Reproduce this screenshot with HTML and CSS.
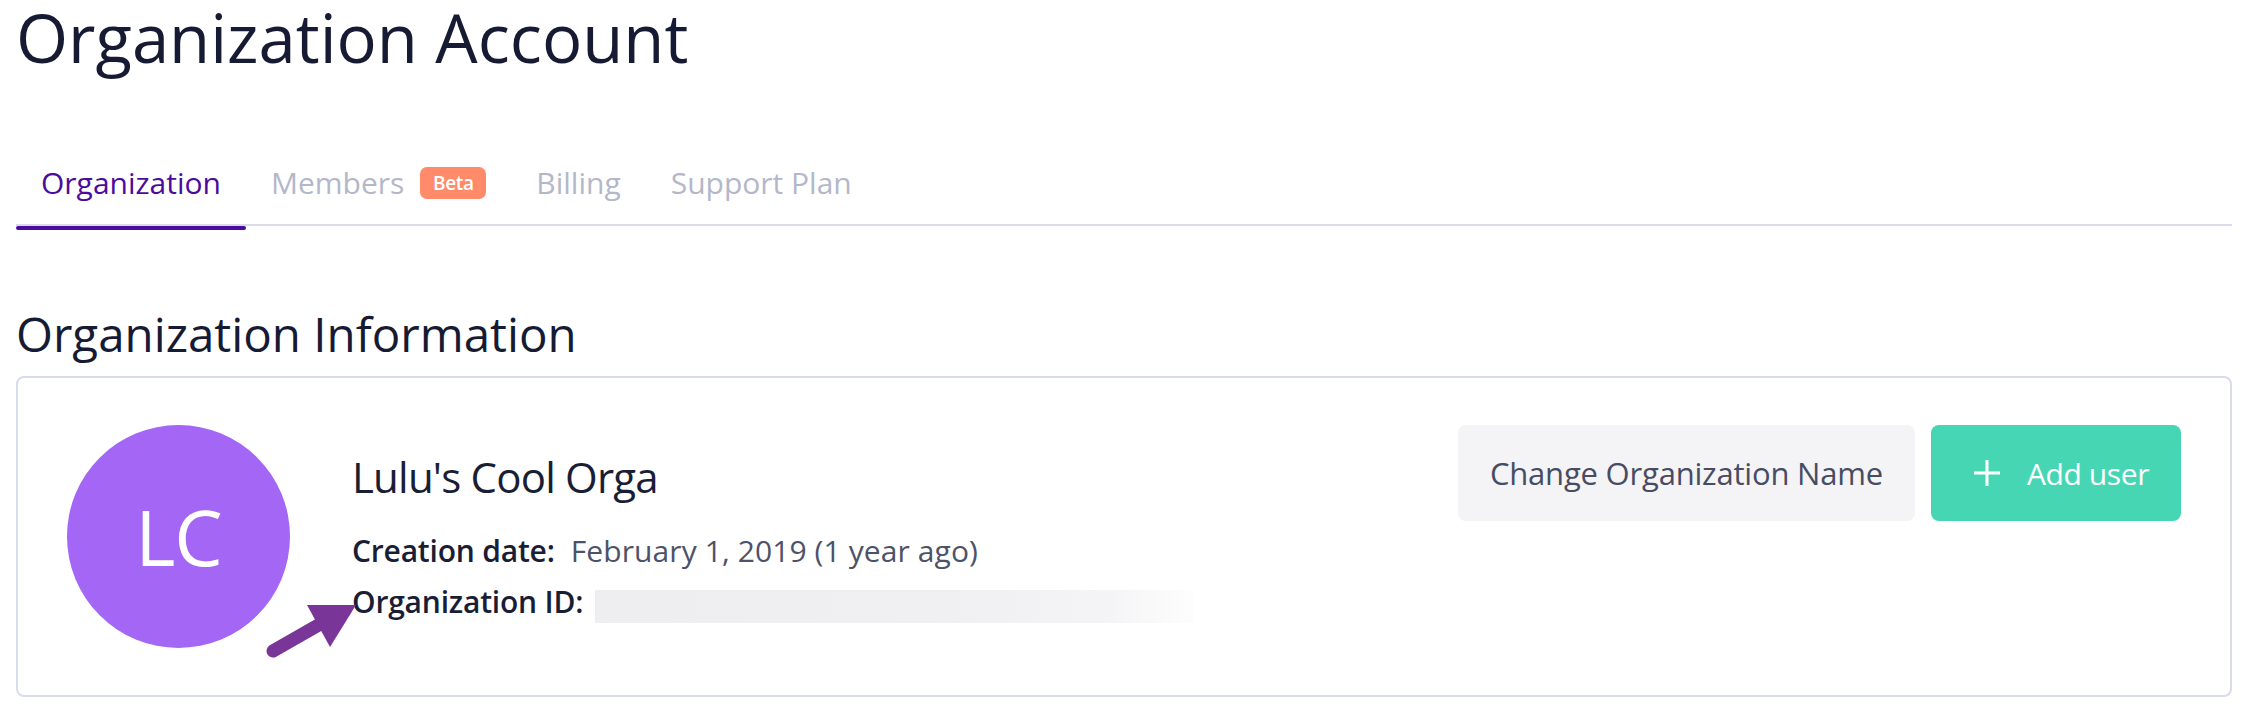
FILE: index.html
```html
<!DOCTYPE html>
<html lang="en">
<head>
<meta charset="utf-8">
<title>Organization Account</title>
<link rel="stylesheet" href="styles.css">
</head>
<body>
<div class="page">
  <h1 class="page-title">Organization Account</h1>

  <nav class="tabs">
    <a class="tab tab-active">Organization</a>
    <a class="tab">Members <span class="badge">Beta</span></a>
    <a class="tab">Billing</a>
    <a class="tab">Support Plan</a>
  </nav>

  <h2 class="section-title">Organization Information</h2>

  <section class="card">
    <div class="avatar">LC</div>
    <div class="info">
      <div class="org-name">Lulu's Cool Orga</div>
      <div class="details">
        <div class="row">
          <span class="label">Creation date:</span>
          <span class="value value-date">February 1, 2019 (1 year ago)</span>
        </div>
        <div class="row">
          <span class="label">Organization ID:</span>
          <span class="id-mask"></span>
        </div>
      </div>
    </div>
    <div class="actions">
      <button class="btn btn-secondary">Change Organization Name</button>
      <button class="btn btn-primary">
        <svg class="plus" width="28" height="28" viewBox="0 0 28 28" aria-hidden="true">
          <path d="M14 1V27M1 14H27" stroke="#ffffff" stroke-width="3" fill="none"/>
        </svg>
        <span>Add user</span>
      </button>
    </div>
    <svg class="annotation-arrow" width="130" height="80" viewBox="0 0 130 80" aria-hidden="true">
      <path d="M33 61L82 33" stroke="#7a3599" stroke-width="13" stroke-linecap="round" fill="none"/>
      <polygon points="116,15 67,15 90,57" fill="#7a3599"/>
    </svg>
  </section>
</div>
</body>
</html>
```

FILE: styles.css
```css
* {
  box-sizing: border-box;
}

html, body {
  margin: 0;
  padding: 0;
  background: #ffffff;
}

body {
  font-family: "Open Sans", "Noto Sans", sans-serif;
  color: #171b33;
}

.page {
  padding: 0 12px 0 16px;
}

.page-title {
  margin: 0;
  font-size: 67px;
  line-height: 74px;
  font-weight: 400;
  color: #161a33;
}

.tabs {
  display: flex;
  margin-top: 73px;
  border-bottom: 2px solid #d9dbe9;
}

.tab {
  position: relative;
  display: flex;
  align-items: center;
  padding: 16px 25px 21px;
  font-size: 30px;
  line-height: 40px;
  color: #b4b7ca;
  text-decoration: none;
  white-space: nowrap;
}

.tab-active {
  color: #4d0b9e;
}

.tab-active::after {
  content: "";
  position: absolute;
  left: 0;
  right: 0;
  bottom: -6px;
  height: 4px;
  border-radius: 2px;
  background: #4d0b9e;
}

.badge {
  display: inline-flex;
  align-items: center;
  justify-content: center;
  width: 66px;
  height: 32px;
  margin-left: 16px;
  border-radius: 7px;
  background: #ff8b6a;
  color: #ffffff;
  font-size: 19px;
  font-weight: 600;
  line-height: 32px;
  letter-spacing: -0.3px;
}

.section-title {
  margin: 80px 0 14px;
  font-size: 47.5px;
  line-height: 56px;
  font-weight: 400;
  color: #161a33;
}

.card {
  position: relative;
  display: flex;
  align-items: flex-start;
  padding: 47px 49px 47px 49px;
  border: 2px solid #d8dbe9;
  border-radius: 8px;
}

.avatar {
  flex: none;
  display: flex;
  align-items: center;
  justify-content: center;
  width: 223px;
  height: 223px;
  border-radius: 50%;
  background: #a366f5;
  color: #ffffff;
  font-size: 77px;
  line-height: 77px;
  letter-spacing: -1px;
}

.info {
  margin-left: 62px;
}

.org-name {
  padding-top: 27px;
  font-size: 42px;
  line-height: 50px;
  letter-spacing: -0.8px;
  color: #1a1e35;
}

.details {
  margin-top: 23px;
}

.row {
  display: flex;
  align-items: flex-start;
  font-size: 30px;
  line-height: 51px;
  white-space: nowrap;
}

.label {
  font-weight: 600;
  color: #1a1e35;
  letter-spacing: -0.2px;
}

.value-date {
  margin-left: 16px;
  color: #4d5268;
  letter-spacing: 0.1px;
}

.id-mask {
  display: block;
  width: 598px;
  height: 33px;
  margin-top: 14px;
  margin-left: 12px;
  background: linear-gradient(90deg, #eeeef1 0%, #f0f0f2 60%, #f4f4f6 85%, #fdfdfd 100%);
}

.actions {
  display: flex;
  gap: 16px;
  margin-left: auto;
}

.btn {
  display: flex;
  align-items: center;
  height: 96px;
  border: 0;
  border-radius: 8px;
  font-family: "Open Sans", "Noto Sans", sans-serif;
  white-space: nowrap;
  cursor: pointer;
}

.btn-secondary {
  padding: 0 32px;
  background: #f4f4f6;
  color: #474c63;
  font-size: 31px;
  letter-spacing: -0.2px;
}

.btn-primary {
  padding: 0 32px 0 42px;
  background: #47d6b4;
  color: #ffffff;
  font-size: 30px;
  letter-spacing: -0.4px;
}

.plus {
  flex: none;
  margin-right: 26px;
}

.annotation-arrow {
  position: absolute;
  left: 222px;
  top: 212px;
}
```
